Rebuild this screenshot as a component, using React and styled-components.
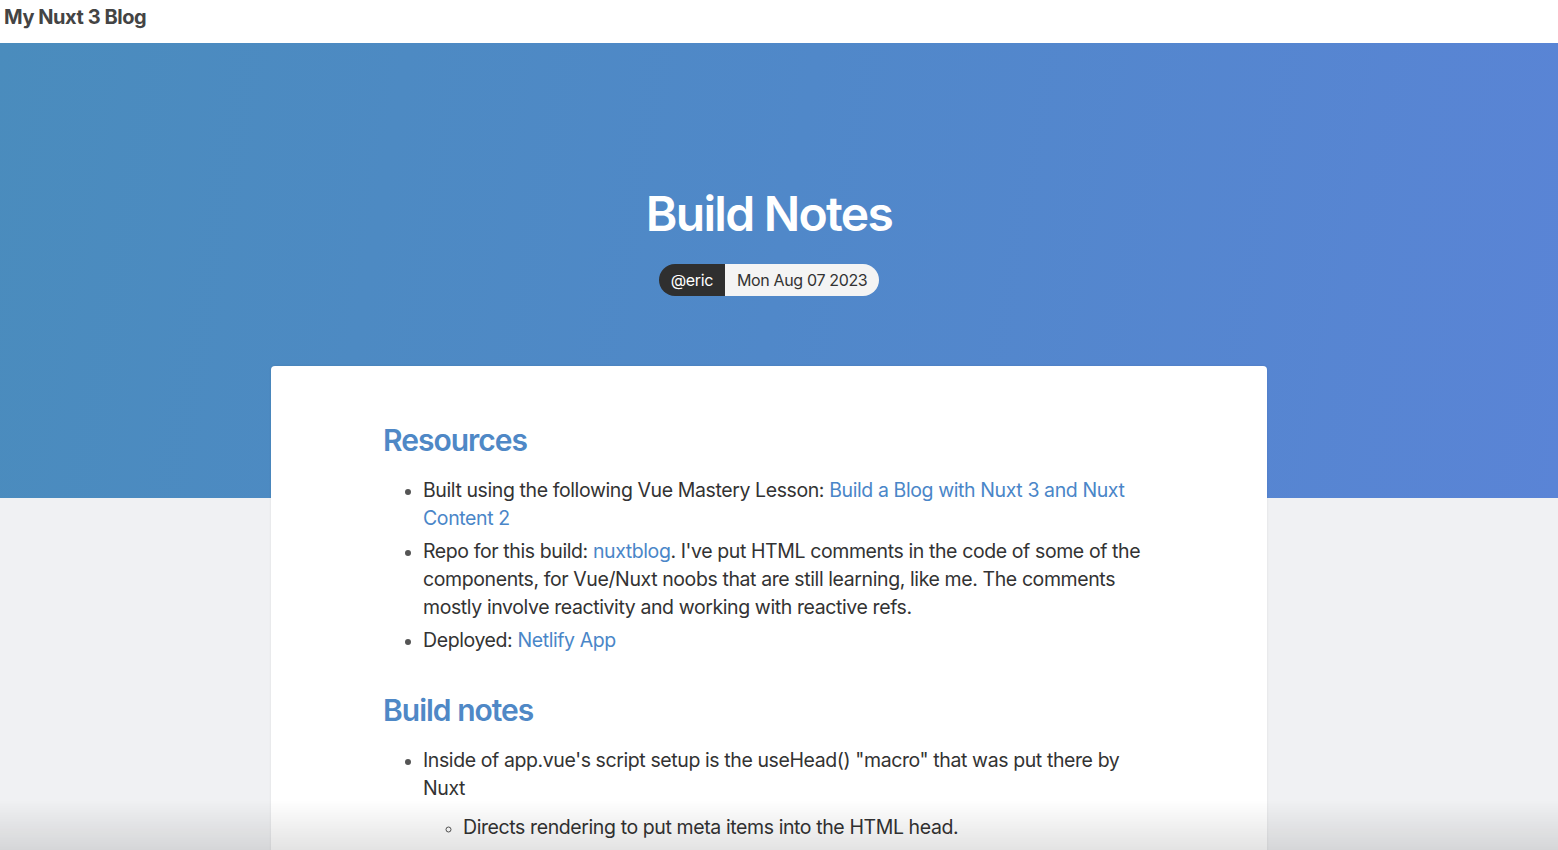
import React from "react";
import styled, { createGlobalStyle } from "styled-components";

const Global = createGlobalStyle`
  html, body { margin: 0; padding: 0; }
  body {
    background: #f0f1f3;
    font-family: Inter, "Noto Sans", "Liberation Sans", sans-serif;
    color: #333;
    overflow: hidden;
  }
  * { box-sizing: border-box; }
`;

const Header = styled.header`
  height: 43px;
  background: #fff;
  display: flex;
  align-items: flex-start;
  padding: 4px 4px 0;
`;

const Brand = styled.a`
  font-size: 20px;
  font-weight: 700;
  color: #444;
  text-decoration: none;
  letter-spacing: -0.45px;
  line-height: 26px;
`;

const Hero = styled.section`
  background: linear-gradient(100deg, #4a8cbd 0%, #5088c9 50%, #5a84d6 100%);
  padding: 142px 20px 202px 0;
  display: flex;
  flex-direction: column;
  align-items: center;
`;

const Title = styled.h1`
  margin: 0;
  font-size: 48px;
  line-height: 58px;
  font-weight: 600;
  color: #fff;
  letter-spacing: -1.7px;
`;

const Meta = styled.div`
  margin-top: 21px;
  display: flex;
  border-radius: 999px;
  overflow: hidden;
  height: 32px;
  font-size: 16px;
  letter-spacing: -0.35px;
`;

const Pill = styled.span`
  display: flex;
  align-items: center;
  padding: 0 12px;
  background: ${(p) => (p.$dark ? "#2f2f2f" : "#f4f4f4")};
  color: ${(p) => (p.$dark ? "#fff" : "#333")};
`;

const Main = styled.main`
  display: flex;
  justify-content: center;
  padding-right: 20px;
`;

const Card = styled.article`
  width: 996px;
  margin-top: -132px;
  background: #fff;
  border-radius: 4px;
  box-shadow: 0 0 3px rgba(0, 0, 0, 0.08);
  padding: 56px 112px 80px;
  min-height: 600px;
`;

const H2 = styled.h2`
  margin: ${(p) => (p.$first ? "0" : "38px")} 0 18px;
  font-size: 30px;
  line-height: 36px;
  font-weight: 600;
  color: #4f88c6;
  letter-spacing: -1px;
`;

const List = styled.ul`
  margin: ${(p) => (p.$nested ? "11px 0 0" : "0")};
  padding-left: 40px;
  list-style: ${(p) => (p.$nested ? "circle" : "disc")};
  font-size: 19.5px;
  line-height: 28px;
  letter-spacing: -0.4px;
  color: #333;
`;

const Item = styled.li`
  margin-bottom: 5px;
  &::marker { font-size: ${(p) => (p.$nested ? "16px" : "18px")}; color: #555; }
`;

const Link = styled.a`
  color: #4a86c8;
  text-decoration: none;
`;

const Fade = styled.div`
  position: fixed;
  left: 0;
  right: 0;
  bottom: 0;
  height: 50px;
  pointer-events: none;
  background: linear-gradient(to bottom, rgba(0, 0, 0, 0), rgba(0, 0, 0, 0.11));
`;

export default function App() {
  return (
    <>
      <Global />
      <Header>
        <Brand href="#">My Nuxt 3 Blog</Brand>
      </Header>
      <Hero>
        <Title>Build Notes</Title>
        <Meta>
          <Pill $dark>@eric</Pill>
          <Pill>Mon Aug 07 2023</Pill>
        </Meta>
      </Hero>
      <Main>
        <Card>
          <H2 $first>Resources</H2>
          <List>
            <Item>
              Built using the following Vue Mastery Lesson:{" "}
              <Link href="#">Build a Blog with Nuxt 3 and Nuxt Content 2</Link>
            </Item>
            <Item>
              Repo for this build: <Link href="#">nuxtblog</Link>. I've put HTML comments in the
              code of some of the components, for Vue/Nuxt noobs that are still learning, like
              me. The comments mostly involve reactivity and working with reactive refs.
            </Item>
            <Item>
              Deployed: <Link href="#">Netlify App</Link>
            </Item>
          </List>
          <H2>Build notes</H2>
          <List>
            <Item>
              Inside of app.vue's script setup is the useHead() "macro" that was put there by
              Nuxt
              <List $nested>
                <Item $nested>Directs rendering to put meta items into the HTML head.</Item>
                <Item $nested>Sets the title and meta description for every page.</Item>
              </List>
            </Item>
          </List>
        </Card>
      </Main>
      <Fade />
    </>
  );
}
